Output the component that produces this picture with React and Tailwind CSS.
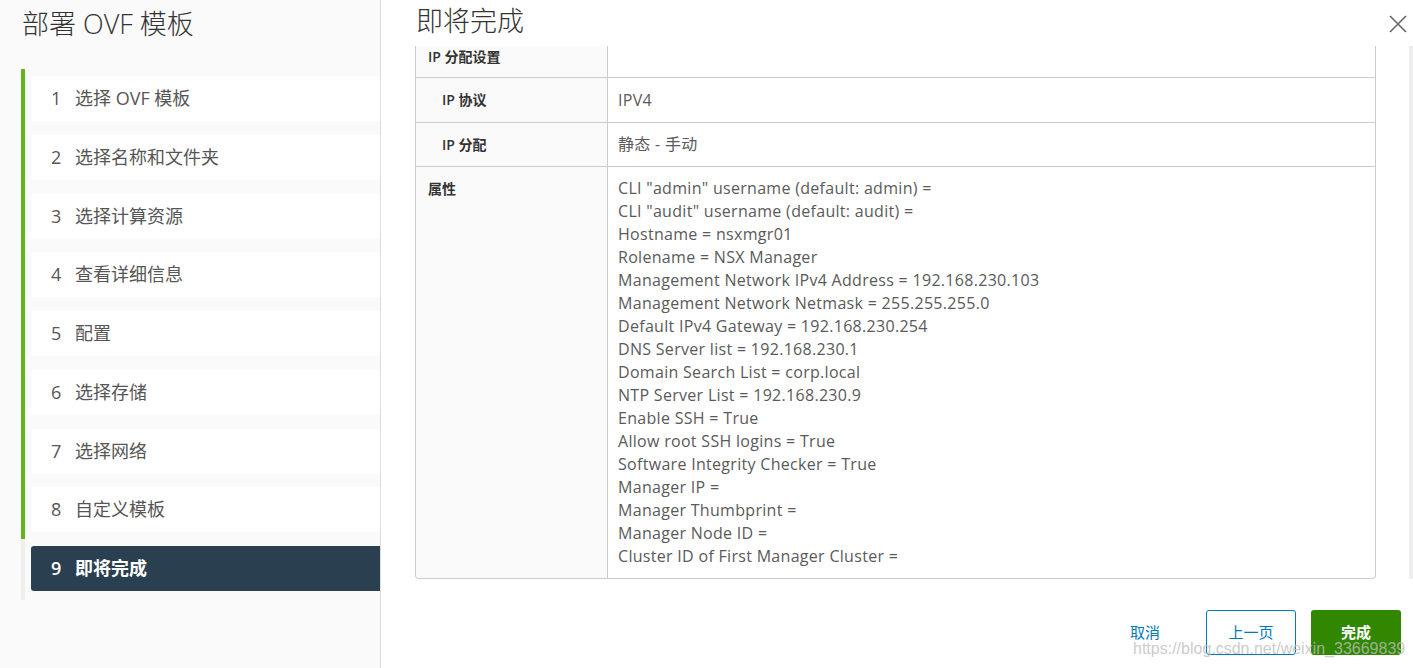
import React from "react";

const steps = [
    "选择 OVF 模板",
    "选择名称和文件夹",
    "选择计算资源",
    "查看详细信息",
    "配置",
    "选择存储",
    "选择网络",
    "自定义模板",
    "即将完成",
];

const props = [
    'CLI "admin" username (default: admin) =',
    'CLI "audit" username (default: audit) =',
    "Hostname = nsxmgr01",
    "Rolename = NSX Manager",
    "Management Network IPv4 Address = 192.168.230.103",
    "Management Network Netmask = 255.255.255.0",
    "Default IPv4 Gateway = 192.168.230.254",
    "DNS Server list = 192.168.230.1",
    "Domain Search List = corp.local",
    "NTP Server List = 192.168.230.9",
    "Enable SSH = True",
    "Allow root SSH logins = True",
    "Software Integrity Checker = True",
    "Manager IP =",
    "Manager Thumbprint =",
    "Manager Node ID =",
    "Cluster ID of First Manager Cluster =",
];

const font = { fontFamily: '"Open Sans", "Noto Sans CJK SC", sans-serif' };

function Sidebar() {
    return (
        <div className="w-[381px] shrink-0 h-full bg-[#fafafa] border-r border-[#dddddd] flex flex-col">
            <h1 className="pl-[22px] pt-[5px] h-[69px] text-[27px] leading-[38px] font-light text-[#333333]">
                部署 OVF 模板
            </h1>
            <div className="flex flex-col pl-[21px]">
                {steps.map((label, i) => {
                    const active = i === steps.length - 1;
                    return (
                        <div
                            key={label}
                            className={`h-[58.75px] pt-[7px] border-l-4 ${active ? "border-[#eeeeee] h-[61px]" : "border-[#62b51a]"}`}
                        >
                            <div
                                className={`h-[45px] ml-[6px] rounded-l-[3px] flex items-center text-[18px] ${active
                                        ? "bg-[#2a3f4f] text-white font-semibold"
                                        : "bg-white text-[#565656]"
                                    }`}
                            >
                                <span className="w-[44px] pl-[20px]">{i + 1}</span>
                                <span>{label}</span>
                            </div>
                        </div>
                    );
                })}
            </div>
        </div>
    );
}

function LabelCell({ children, indent, className = "" }) {
    return (
        <div
            className={`w-[192px] shrink-0 bg-[#fafafa] border-r border-[#cccccc] text-[14px] font-semibold text-[#333333] ${indent ? "pl-[26px]" : "pl-[12px]"
                } ${className}`}
        >
            {children}
        </div>
    );
}

function Table() {
    return (
        <div className="ml-[34px] w-[961px] h-[533px] border-x border-b border-[#cccccc] rounded-b-[4px] flex flex-col overflow-hidden">
            <div className="flex h-[32px] border-b border-[#cccccc]">
                <LabelCell className="leading-[22px]">IP 分配设置</LabelCell>
                <div className="flex-1" />
            </div>
            <div className="flex h-[45px] border-b border-[#cccccc]">
                <LabelCell indent className="leading-[44px]">IP 协议</LabelCell>
                <div className="flex-1 pl-[10px] text-[16px] tracking-[0.3px] leading-[44px] text-[#5a5a5a]">IPV4</div>
            </div>
            <div className="flex h-[44px] border-b border-[#cccccc]">
                <LabelCell indent className="leading-[43px]">IP 分配</LabelCell>
                <div className="flex-1 pl-[10px] text-[16px] tracking-[0.3px] leading-[43px] text-[#5a5a5a]">静态 - 手动</div>
            </div>
            <div className="flex flex-1">
                <LabelCell className="pt-[10px] leading-[23px]">属性</LabelCell>
                <div className="flex-1 pl-[10px] pt-[10px] text-[16px] tracking-[0.3px] leading-[23px] text-[#5a5a5a]">
                    {props.map((p) => (
                        <div key={p}>{p}</div>
                    ))}
                </div>
            </div>
        </div>
    );
}

export default function App() {
    return (
        <div className="w-[1413px] h-[668px] flex overflow-hidden bg-white" style={font}>
            <Sidebar />
            <div className="flex-1 relative flex flex-col">
                <div className="h-[46px] flex items-start justify-between">
                    <h2 className="pl-[35px] pt-[2px] text-[27px] leading-[38px] font-light text-[#333333]">即将完成</h2>
                    <button className="mt-[15px] mr-[6px] w-[18px] h-[18px] text-[#666666]">
                        <svg viewBox="0 0 18 18" width="18" height="18" fill="none" stroke="currentColor" strokeWidth="1.6">
                            <path d="M1 1L17 17M17 1L1 17" />
                        </svg>
                    </button>
                </div>
                <div className="flex">
                    <Table />
                    <div className="ml-auto w-[4px] h-[533px] bg-[#eeeeee]" />
                </div>
                <div className="flex justify-end items-center gap-[15px] pt-[31px] pr-[12px]">
                    <button className="w-[76px] h-[45px] mr-[8px] text-[15px] text-[#0079b8]">取消</button>
                    <button className="w-[90px] h-[45px] text-[15px] text-[#0079b8] border border-[#0079b8] rounded-[3px] bg-white">
                        上一页
                    </button>
                    <button className="w-[90px] h-[45px] text-[15px] text-white font-semibold bg-[#318700] rounded-[3px]">
                        完成
                    </button>
                </div>
                <div
                    className="absolute left-[752px] top-[637px] text-[16px] text-[#bdbdbd]/80 pointer-events-none"
                    style={{ fontFamily: '"Liberation Sans", sans-serif' }}
                >
                    https://blog.csdn.net/weixin_33669839
                </div>
            </div>
        </div>
    );
}
